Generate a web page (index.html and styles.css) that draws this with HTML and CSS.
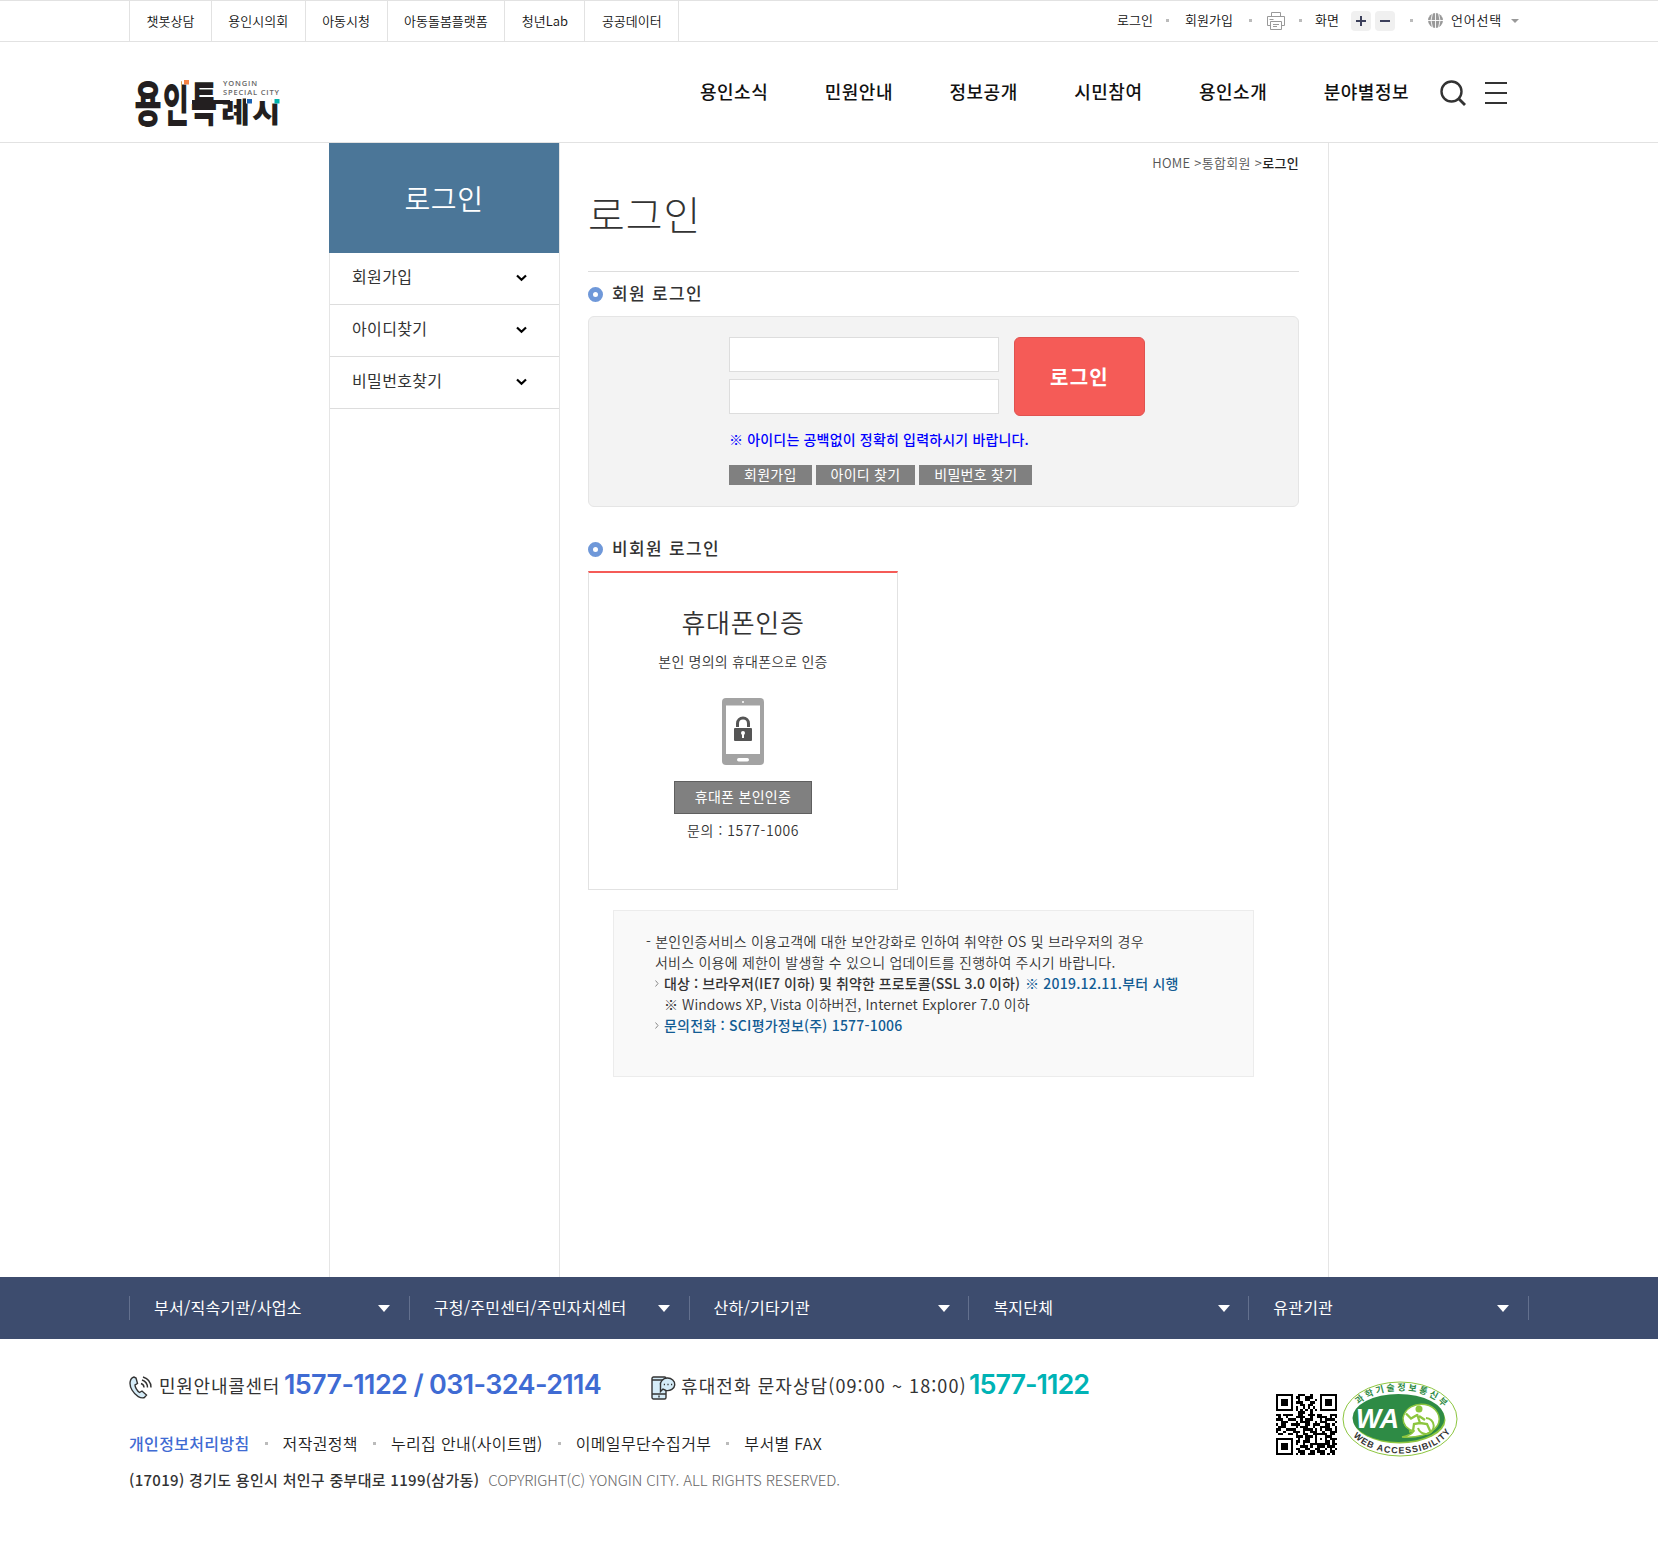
FILE: index.html
```html
<!DOCTYPE html>
<html lang="ko">
<head>
<meta charset="utf-8">
<title>로그인 - 용인특례시</title>
<link rel="stylesheet" href="styles.css">
</head>
<body>
<div class="topbar">
  <ul class="sites">
    <li>챗봇상담</li><li>용인시의회</li><li>아동시청</li><li>아동돌봄플랫폼</li><li>청년Lab</li><li>공공데이터</li>
  </ul>
  <div class="tools">
    <span class="t-login">로그인</span><i class="dot"></i>
    <span class="t-join">회원가입</span><i class="dot"></i>
    <svg class="printer" width="18" height="18" viewBox="0 0 18 18" fill="none" stroke="#999"><path d="M4.500 4.500v-4h9v4M3.500 13.500h-3v-9h17v9h-3M3.500 9.500h11v8h-11zM6 12.500h6M6 14.500h4M2.500 7.500h4"/></svg>
    <i class="dot"></i>
    <span class="t-zoom">화면</span>
    <b class="zoom"><svg width="10" height="10"><path d="M0 5h10M5 0v10" stroke="#3c405b" stroke-width="2"/></svg></b>
    <b class="zoom"><svg width="10" height="10"><path d="M0 5h10" stroke="#3c405b" stroke-width="2"/></svg></b>
    <i class="dot"></i>
    <svg class="globe" width="15" height="15" viewBox="0 0 15 15"><circle cx="7.500" cy="7.500" r="7.500" fill="#999"/><path d="M7.500 0v15M0 7.500h15M4.500 0q-3 7.500 0 15M10.500 0q3 7.500 0 15" stroke="#fff" stroke-width=".9" fill="none"/></svg>
    <span class="t-lang">언어선택</span>
    <svg class="caret" width="8" height="4"><path d="M0 0h8L4 4z" fill="#999"/></svg>
  </div>
</div>
<header class="header">
  <svg class="logo" width="150" height="56" viewBox="0 0 150 56" font-family="'Noto Sans CJK KR', sans-serif" font-weight="900" fill="#231f20">
    <text transform="translate(.5 47) scale(.6 1)" font-size="49">용</text>
    <text transform="translate(29 46) scale(.6 1)" font-size="47">인</text>
    <text transform="translate(57 46) scale(.6 1)" font-size="47">특</text>
    <text transform="translate(87 48) scale(1.120 1)" font-size="28">례</text>
    <text transform="translate(118 48) scale(1.100 1)" font-size="28">시</text>
    <path d="M58 25h38v4H58z"/>
    <path d="M48 2h9v7.500h-9zM112 21h7.500v7.500H112zM138 21h10v7.500h-10z" fill="#fff"/>
    <path d="M50 5h5v4.500h-5z" fill="#f58345"/><path d="M113 24h5v4.500h-5z" fill="#1b64b4"/><path d="M140.500 24h5v4.500h-5z" fill="#00b5ad"/>
    <g font-family="'Open Sans', sans-serif" font-weight="600" font-size="7.500" fill="#666"><text x="89" y="11" textLength="34">YONGIN</text><text x="89" y="20" textLength="56">SPECIAL CITY</text></g>
  </svg>
  <nav class="gnb"><a>용인소식</a><a>민원안내</a><a>정보공개</a><a>시민참여</a><a>용인소개</a><a>분야별정보</a></nav>
  <svg class="search" width="27" height="27" fill="none" stroke="#333"><circle cx="11.500" cy="11.500" r="10" stroke-width="2.400"/><path d="M18.500 18.500l6.500 6.500" stroke-width="2.800"/></svg>
  <div class="menu"><i></i><i></i><i></i></div>
</header>
<main class="main">
  <aside class="side">
    <h2>로그인</h2>
    <ul>
      <li><span>회원가입</span><svg width="11" height="8" fill="none" stroke="#000" stroke-width="2.200"><path d="M1 1.500l4.500 4.300L10 1.500"/></svg></li>
      <li><span>아이디찾기</span><svg width="11" height="8" fill="none" stroke="#000" stroke-width="2.200"><path d="M1 1.500l4.500 4.300L10 1.500"/></svg></li>
      <li><span>비밀번호찾기</span><svg width="11" height="8" fill="none" stroke="#000" stroke-width="2.200"><path d="M1 1.500l4.500 4.300L10 1.500"/></svg></li>
    </ul>
  </aside>
  <section class="content">
    <p class="crumb">HOME &gt;통합회원 &gt;<strong>로그인</strong></p>
    <h1>로그인</h1>
    <h3 class="first"><i class="ring"></i><span>회원 로그인</span></h3>
    <form class="loginbox">
      <div class="fields">
        <div class="inputs"><input type="text"><input type="password"></div>
        <button type="button">로그인</button>
      </div>
      <p class="notice">※ 아이디는 공백없이 정확히 입력하시기 바랍니다.</p>
      <div class="links"><a>회원가입</a><a>아이디 찾기</a><a>비밀번호 찾기</a></div>
    </form>
    <h3 class="second"><i class="ring"></i><span>비회원 로그인</span></h3>
    <div class="card">
      <h4>휴대폰인증</h4>
      <p class="sub">본인 명의의 휴대폰으로 인증</p>
      <svg width="42" height="67" viewBox="0 0 42 67"><rect width="42" height="67" rx="4" fill="#a3a3a3"/><path d="M4 7.500h34V56H4z" fill="#fff"/><circle cx="21" cy="4" r="1" fill="#fff"/><rect x="15" y="60" width="12" height="3.500" rx="1.700" fill="#fff"/><rect x="12" y="30" width="18" height="13" rx="1" fill="#555"/><path d="M15.500 29v-3.500a5.500 5.500 0 0 1 11 0V29" fill="none" stroke="#555" stroke-width="3"/><circle cx="21" cy="35" r="2" fill="#fff"/><path d="M20 35h2v5h-2z" fill="#fff"/></svg>
      <a class="btn">휴대폰 본인인증</a>
      <p class="ask">문의 : 1577-1006</p>
    </div>
    <div class="note">
      <p class="n1">- 본인인증서비스 이용고객에 대한 보안강화로 인하여 취약한 OS 및 브라우저의 경우</p>
      <p class="n2">서비스 이용에 제한이 발생할 수 있으니 업데이트를 진행하여 주시기 바랍니다.</p>
      <p class="n3"><svg width="4" height="7" fill="none" stroke="#888"><path d="M.5 .5l2.500 3-2.500 3"/></svg><b>대상 : 브라우저(IE7 이하) 및 취약한 프로토콜(SSL 3.0 이하)</b> <b class="blue">※ 2019.12.11.부터 시행</b></p>
      <p class="n4">※ Windows XP, Vista 이하버전, Internet Explorer 7.0 이하</p>
      <p class="n5"><svg width="4" height="7" fill="none" stroke="#888"><path d="M.5 .5l2.500 3-2.500 3"/></svg><b class="blue">문의전화 : SCI평가정보(주) 1577-1006</b></p>
    </div>
  </section>
</main>
<div class="sitebar">
  <ul>
    <li><span>부서/직속기관/사업소</span><i></i></li><li><span>구청/주민센터/주민자치센터</span><i></i></li><li><span>산하/기타기관</span><i></i></li><li><span>복지단체</span><i></i></li><li><span>유관기관</span><i></i></li>
  </ul>
</div>
<footer class="footer">
  <div class="info">
    <div class="calls">
      <svg width="23" height="23" viewBox="0 0 23 23" fill="none" stroke="#333" stroke-width="1.400"><path d="M5 1C1 2-.5 8 3 14s9 9 12.500 7.500l2-2.500-4.500-4-2.500 1.500C8 15 6 11 6 9l2.500-1.500L7 2z" fill="#d5ecf8"/><path d="M12 7.500q3 1 3 4M13 4q5.500 2 5.500 7.500M14 1q8 2.500 8 10.500"/></svg>
      <span class="c1">민원안내콜센터</span><b class="num1">1577-1122 / 031-324-2114</b>
      <svg class="sms" width="25" height="24" viewBox="0 0 25 24" fill="#d5ecf8" stroke="#333" stroke-width="1.400"><rect x="1" y="1" width="14" height="22" rx="1.500"/><path d="M1 4h14M1 18h14M8 19.500v2"/><path d="M12 13l-2.500 2.500V9.500a7.200 6.300 0 1 1 5.500 5z"/><path d="M12.800 8.500H14M16.400 8.500h1.200M20 8.500h1.200" stroke-width="1.400"/></svg>
      <span class="c2">휴대전화 문자상담(09:00 ~ 18:00)</span><b class="num2">1577-1122</b>
    </div>
    <ul class="policy"><li class="on">개인정보처리방침</li><li>저작권정책</li><li>누리집 안내(사이트맵)</li><li>이메일무단수집거부</li><li>부서별 FAX</li></ul>
    <p class="addr"><strong>(17019) 경기도 용인시 처인구 중부대로 1199(삼가동)</strong><span>COPYRIGHT(C) YONGIN CITY. ALL RIGHTS RESERVED.</span></p>
  </div>
  <div class="marks">
    <svg class="qr" width="61" height="61" viewBox="0 0 25 25" stroke="#000" shape-rendering="crispEdges"><path fill="none" d="M0 .5h7m2 0h3m2 0h1m3 0h7M0 1.500h1m5 0h1m1 0h2m2 0h3m3 0h1m5 0h1M0 2.500h1m1 0h3m1 0h1m2 0h1m2 0h2m2 0h1m1 0h1m1 0h3m1 0h1M0 3.500h1m1 0h3m1 0h1m1 0h3m3 0h2m2 0h1m1 0h3m1 0h1M0 4.500h1m1 0h3m1 0h1m3 0h2m1 0h2m3 0h1m1 0h3m1 0h1M0 5.500h1m5 0h1m1 0h1m2 0h1m1 0h1m1 0h1m2 0h1m5 0h1M0 6.500h7m1 0h1m1 0h1m1 0h1m1 0h1m1 0h1m1 0h7M9 7.500h3m2 0h1M0 8.500h2m1 0h4m2 0h2m2 0h3m1 0h2m3 0h3M1 9.500h1m2 0h1m3 0h4m2 0h1m2 0h4m1 0h1m1 0h1M0 10.500h3m2 0h3m2 0h1m1 0h3m3 0h1m1 0h4M2 11.500h3m3 0h1m1 0h4m2 0h1m1 0h3m3 0h1M0 12.500h1m1 0h2m2 0h4m2 0h2m1 0h3m2 0h2m1 0h1M1 13.500h3m4 0h1m1 0h3m2 0h1m2 0h4m2 0h1M0 14.500h2m2 0h4m3 0h4m1 0h1m1 0h1m1 0h3m1 0h1M0 15.500h1m2 0h1m3 0h3m1 0h1m2 0h3m2 0h1m2 0h3M1 16.500h2m2 0h2m1 0h1m2 0h2m2 0h6m1 0h2M8 17.500h3m1 0h3m1 0h1m3 0h3M0 18.500h7m2 0h1m2 0h2m2 0h1m1 0h1m1 0h1m1 0h3M0 19.500h1m5 0h1m1 0h2m1 0h3m2 0h1m3 0h2m1 0h1M0 20.500h1m1 0h3m1 0h1m1 0h1m2 0h1m2 0h8m1 0h2M0 21.500h1m1 0h3m1 0h1m3 0h3m1 0h1m2 0h3m1 0h3M0 22.500h1m1 0h3m1 0h1m1 0h2m2 0h2m2 0h2m2 0h1m1 0h1m1 0h1M0 23.500h1m5 0h1m2 0h3m2 0h2m1 0h3m2 0h2M0 24.500h7m1 0h1m1 0h2m1 0h3m2 0h2m1 0h1m1 0h1"/></svg>
    <svg width="116" height="76" viewBox="0 0 116 76">
      <defs><path id="arc-top" d="M10 38A48 28.500 0 0 1 106 38"/><path id="arc-bottom" d="M4 38A54 34.500 0 0 0 112 38"/></defs>
      <ellipse cx="58" cy="38" rx="57" ry="37" fill="#fff" stroke="#8dc63f"/>
      <ellipse cx="57.500" cy="39" rx="46" ry="23.500" fill="#8dc63f"/><ellipse cx="56.500" cy="37" rx="46" ry="24" fill="#2e8b45"/>
      <path d="M61 37C63 27 73 22 83 23.500c12 2 17 13 12.500 21C89 54 74 57 60 56c6-1 10-3 12-6-8-2-11-6-11-13z" fill="#fff" stroke="#8dc63f" stroke-width="1.500"/>
      <text x="14" y="46.500" font-family="'Liberation Sans', Arial, sans-serif" font-weight="bold" font-style="italic" font-size="28" textLength="43" lengthAdjust="spacingAndGlyphs" fill="#fff">WA</text>
      <circle cx="77" cy="28" r="3.500" fill="#8dc63f"/><path d="M75 33l3 9-6 1-1 7-4 .5M75 34l-6 3.500-5-5M77 35l6 4M78 42l7 1 4 9" fill="none" stroke="#8dc63f" stroke-width="2.300"/><path d="M84 37a8 8 0 1 1-8 10" fill="none" stroke="#8dc63f" stroke-width="2"/>
      <text font-family="'Noto Sans CJK KR', sans-serif" font-weight="700" font-size="9" fill="#2e8b45"><textPath href="#arc-top" startOffset="16" textLength="93">과학기술정보통신부</textPath></text>
      <text font-family="'Liberation Sans', Arial, sans-serif" font-weight="bold" font-size="9" fill="#333"><textPath href="#arc-bottom" startOffset="19" textLength="108">WEB ACCESSIBILITY</textPath></text>
    </svg>
  </div>
</footer>
</body>
</html>
```
FILE: styles.css
```css
* { box-sizing: border-box; margin: 0; padding: 0; }
body { font-family: "Noto Sans CJK KR", "Noto Sans", sans-serif; color: #333; background: #fff; font-size: 14px; }
ul { list-style: none; }
svg { display: block; flex: none; }
i, b { flex: none; }
h1, h2, h3, h4 { font-weight: 400; }

.topbar { height: 42px; border-top: 1px solid #e2e2e2; border-bottom: 1px solid #e2e2e2; display: flex; padding-left: 129px; color: #111; font-size: 13px; font-weight: 350; white-space: nowrap; }
.sites { display: flex; width: 988px; border-left: 1px solid #e2e2e2; }
.sites li { padding: 0 16.500px; border-right: 1px solid #e2e2e2; line-height: 39px; }
.tools { display: flex; align-items: center; height: 39px; }
.tools span { line-height: 38px; height: 39px; }
.dot { width: 3px; height: 3px; background: #bbb; }
.t-login { width: 49px; }
.t-join { width: 64px; margin-left: 16px; }
.printer { margin-left: 15px; }
.printer + .dot { margin-left: 14px; }
.t-zoom { margin-left: 13px; width: 36px; }
.zoom { width: 20px; height: 20px; border-radius: 4px; background: #f0f0f0; display: flex; align-items: center; justify-content: center; margin-right: 4px; }
.zoom + .dot { margin-left: 11px; }
.globe { margin-left: 15px; }
.t-lang { margin-left: 8px; letter-spacing: .8px; width: 60px; }

.header { height: 101px; border-bottom: 1px solid #e2e2e2; display: flex; }
.logo { margin: 33px 0 0 134px; overflow: visible; }
.gnb { display: flex; gap: 56.500px; margin: 36px 0 0 416px; width: 740px; font-size: 18px; font-weight: 500; line-height: 26px; color: #111; letter-spacing: .5px; white-space: nowrap; }
.search { margin-top: 38px; }
.menu { width: 22px; margin: 40px 0 0 18px; display: flex; flex-direction: column; gap: 8px; }
.menu i { height: 2px; background: #333; }

.main { display: flex; width: 1000px; height: 1134px; margin-left: 329px; }
.side { width: 231px; border: 1px solid #e5e5e5; border-width: 0 1px; }
.side h2 { height: 110px; margin-left: -1px; background: #4b7698; color: #fff; font-size: 28px; font-weight: 350; line-height: 110px; text-align: center; letter-spacing: .6px; }
.side li { height: 52px; border-bottom: 1px solid #ddd; display: flex; justify-content: space-between; align-items: center; padding: 0 32px 1px 22px; font-size: 16px; letter-spacing: .35px; }
.side li span { padding-bottom: 4px; }
.content { width: 769px; border-right: 1px solid #e5e5e5; padding: 10px 29px 0 28px; }
.crumb { text-align: right; line-height: 19px; height: 20px; font-size: 13px; font-weight: 350; color: #555; letter-spacing: .3px; }
.crumb strong { font-weight: 500; color: #222; }
h1 { margin-top: 12px; height: 87px; line-height: 56px; font-size: 40px; font-weight: 300; letter-spacing: 1px; border-bottom: 1px solid #ddd; }
h3 { display: flex; align-items: center; gap: 9px; height: 24px; font-size: 17px; font-weight: 500; letter-spacing: 1.350px; }
h3 span { line-height: 24px; padding-bottom: 2px; }
.ring { width: 15px; height: 15px; border-radius: 50%; border: 5px solid #6f98d9; }
.first { margin: 10px 0; }
.second { margin: 30px 0 10px; }
.loginbox { height: 191px; border: 1px solid #e5e5e5; border-radius: 6px; background: #f3f3f3; padding: 20px 0 0 140px; }
.fields { display: flex; gap: 15px; }
.inputs { display: flex; flex-direction: column; gap: 7px; }
.inputs input { width: 270px; height: 35px; border: 1px solid #ddd; background: #fff; }
.fields button { width: 131px; height: 79px; border: 1px solid #e0524f; border-radius: 6px; background: #f55b57; color: #fff; font: 700 20px "Noto Sans CJK KR", sans-serif; letter-spacing: 1.300px; }
.notice { margin-top: 13px; line-height: 20px; color: #00f; font-weight: 500; letter-spacing: .17px; }
.links { display: flex; gap: 4px; margin-top: 16px; }
.links a { background: #808080; color: #fff; line-height: 18px; height: 20px; padding: 0 15px; letter-spacing: .25px; }
.card { width: 310px; height: 319px; border: 1px solid #e2e2e2; border-top: 2px solid #f55b57; display: flex; flex-direction: column; align-items: center; }
.card h4 { margin-top: 29px; line-height: 40px; font-size: 26px; font-weight: 350; letter-spacing: .7px; }
.sub { margin: 9px 0 27px; line-height: 20px; font-weight: 350; letter-spacing: .2px; }
.btn { margin-top: 16px; width: 138px; height: 33px; line-height: 29px; border: 1px solid #5f5f5f; background: #808080; color: #fff; text-align: center; letter-spacing: .3px; }
.ask { margin-top: 5px; line-height: 22px; font-weight: 350; letter-spacing: .6px; }
.note { margin: 20px 0 0 25px; width: 641px; height: 167px; border: 1px solid #ececec; background: #f9f9f9; padding: 20px 0 0 32px; line-height: 21px; white-space: nowrap; font-weight: 350; letter-spacing: .22px; }
.note b { font-weight: 500; letter-spacing: .08px; }
.note .blue { color: #125c94; letter-spacing: .22px; }
.n2 { padding-left: 9px; }
.n3, .n5 { display: flex; align-items: center; gap: 5px; padding-left: 9px; }
.n4 { padding-left: 18px; letter-spacing: .1px; }

.sitebar { height: 62px; background: #3d4c6e; padding: 19px 0 0 129px; }
.sitebar ul { display: flex; width: 1400px; border-right: 1px solid #63708e; }
.sitebar li { width: 279.800px; height: 24px; border-left: 1px solid #63708e; padding: 0 18.500px 0 24px; display: flex; justify-content: space-between; align-items: center; color: #fff; font-size: 16px; line-height: 24px; letter-spacing: .25px; }
.sitebar li span { padding-bottom: 3px; }
.sitebar i { border: 6.500px solid transparent; border-top: 7px solid #fff; border-bottom: 0; }

.footer { display: flex; height: 214px; padding-left: 129px; white-space: nowrap; }
.info { width: 1147px; padding-top: 29px; }
.calls { display: flex; align-items: center; height: 34px; }
.calls svg { margin-top: 5px; }
.c1 { margin-left: 7px; width: 125px; font-size: 18px; letter-spacing: .75px; }
.calls b { font-family: Inter, sans-serif; font-weight: 600; font-size: 27px; padding-bottom: 1px; letter-spacing: -.65px; }
.num1 { width: 367px; color: #3f6bd3; }
.c2 { margin-left: 5px; width: 288px; font-size: 18px; letter-spacing: 1.080px; }
.calls .num2 { color: #00b3b5; letter-spacing: -1px; }
.policy { display: flex; margin-top: 29px; font-size: 16px; line-height: 24px; font-weight: 350; color: #222; letter-spacing: .35px; }
.policy li { display: flex; align-items: center; }
.policy li + li::before { content: ""; width: 3px; height: 3px; background: #bbb; margin: 0 15px; }
.policy .on { color: #3f6bd3; font-weight: 500; }
.addr { margin-top: 13px; line-height: 24px; font-size: 15px; display: flex; gap: 9px; }
.addr strong { font-weight: 500; letter-spacing: .3px; }
.addr span { color: #666; font-weight: 300; letter-spacing: -.1px; }
.marks { display: flex; padding-top: 42px; gap: 5px; }
.marks svg { overflow: visible; }
.qr { margin-top: 13px; }
```
